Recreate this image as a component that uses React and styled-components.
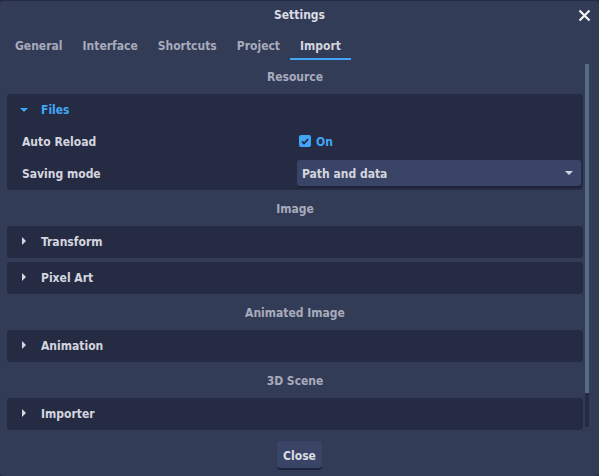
import React, { useState } from 'react'
import styled, { createGlobalStyle } from 'styled-components'

const GlobalStyle = createGlobalStyle`
  html, body {
    margin: 0;
    padding: 0;
    background: #262b44;
  }
  body {
    font-family: "DejaVu Sans Condensed", "DejaVu Sans", sans-serif;
    font-stretch: condensed;
    font-weight: bold;
    font-size: 12px;
    color: #d4d6df;
  }
`

const tabs = ['General', 'Interface', 'Shortcuts', 'Project', 'Import']

export default function App() {
  const [active, setActive] = useState('Import')
  const [autoReload, setAutoReload] = useState(true)

  return (
    <>
      <GlobalStyle />
      <Dialog>
        <TitleBar>
          <span />
          <Title>Settings</Title>
          <CloseX aria-label="close">
            <svg width="13" height="13" viewBox="0 0 13 13">
              <path d="M1.5 1.5 L11.5 11.5 M11.5 1.5 L1.5 11.5" stroke="#f4f4f4" strokeWidth="2.2" />
            </svg>
          </CloseX>
        </TitleBar>

        <TabBar>
          {tabs.map(t => (
            <Tab key={t} $active={t === active} onClick={() => setActive(t)}>{t}</Tab>
          ))}
        </TabBar>

        <Body>
          <Scroll>
            <SectionTitle>Resource</SectionTitle>
            <Panel>
              <PanelHeader $open>
                <ArrowDown />
                Files
              </PanelHeader>
              <Row $h={34}>
                <Label>Auto Reload</Label>
                <CheckWrap onClick={() => setAutoReload(!autoReload)}>
                  <Check $on={autoReload}>
                    {autoReload && (
                      <svg width="8" height="7" viewBox="0 0 8 7">
                        <path d="M1 3.5 L3 5.5 L7 1.2" fill="none" stroke="#262b44" strokeWidth="1.8" />
                      </svg>
                    )}
                  </Check>
                  <Label $accent>{autoReload ? 'On' : 'Off'}</Label>
                </CheckWrap>
              </Row>
              <Row $h={30}>
                <Label>Saving mode</Label>
                <Select>
                  <Label>Path and data</Label>
                  <Caret />
                </Select>
              </Row>
            </Panel>

            <SectionTitle>Image</SectionTitle>
            <Panel>
              <PanelHeader><ArrowRight />Transform</PanelHeader>
            </Panel>
            <Panel>
              <PanelHeader><ArrowRight />Pixel Art</PanelHeader>
            </Panel>

            <SectionTitle>Animated Image</SectionTitle>
            <Panel>
              <PanelHeader><ArrowRight />Animation</PanelHeader>
            </Panel>

            <SectionTitle>3D Scene</SectionTitle>
            <Panel>
              <PanelHeader><ArrowRight />Importer</PanelHeader>
            </Panel>
          </Scroll>
          <ScrollTrack>
            <ScrollThumb />
          </ScrollTrack>
        </Body>

        <Footer>
          <Button>Close</Button>
        </Footer>
      </Dialog>
    </>
  )
}

const Dialog = styled.div`
  margin-top: 1px;
  height: 475px;
  width: 599px;
  background: #333c57;
  border-radius: 4px;
  display: flex;
  flex-direction: column;
  box-sizing: border-box;
`

const TitleBar = styled.div`
  height: 28px;
  display: grid;
  grid-template-columns: 1fr auto 1fr;
  align-items: center;
`

const Title = styled.div`
  color: #dcdde3;
`

const CloseX = styled.div`
  justify-self: end;
  margin-right: 8px;
  display: flex;
  cursor: pointer;
`

const TabBar = styled.div`
  display: flex;
  padding-left: 5px;
  height: 31px;
`

const Tab = styled.div`
  padding: 4px 10px 0;
  display: flex;
  align-items: center;
  box-sizing: border-box;
  color: ${p => (p.$active ? '#d4d6df' : '#a7abbb')};
  border-bottom: 2px solid ${p => (p.$active ? '#41a6f6' : 'transparent')};
  cursor: pointer;
`

const Body = styled.div`
  display: flex;
  padding-left: 7px;
  height: 373px;
`

const Scroll = styled.div`
  width: 576px;
  display: flex;
  flex-direction: column;
  gap: 4px;
  padding-top: 2px;
  overflow: hidden;
`

const SectionTitle = styled.div`
  height: 28px;
  padding-top: 2px;
  box-sizing: border-box;
  display: flex;
  align-items: center;
  justify-content: center;
  color: #a7abbb;
  flex-shrink: 0;
`

const Panel = styled.div`
  background: #262b44;
  border-radius: 3px;
  padding-bottom: 2px;
  flex-shrink: 0;
`

const PanelHeader = styled.div`
  height: 30px;
  padding-top: 2px;
  box-sizing: border-box;
  display: flex;
  align-items: center;
  padding-left: 13px;
  gap: 13px;
  color: ${p => (p.$open ? '#41a6f6' : '#d4d6df')};
`

const ArrowDown = styled.span`
  width: 0;
  height: 0;
  border-left: 4px solid transparent;
  border-right: 4px solid transparent;
  border-top: 4px solid #41a6f6;
  margin-top: -1px;
`

const ArrowRight = styled.span`
  width: 0;
  height: 0;
  border-top: 4.5px solid transparent;
  border-bottom: 4.5px solid transparent;
  border-left: 4px solid #d4d6df;
  margin: -2px 2px 0 2px;
`

const Row = styled.div`
  display: grid;
  grid-template-columns: 275px 1fr;
  align-items: center;
  height: ${p => p.$h}px;
  padding: 0 2px 0 15px;
`

const Label = styled.span`
  padding-top: 2px;
  color: ${p => (p.$accent ? '#41a6f6' : '#d4d6df')};
`

const CheckWrap = styled.div`
  display: flex;
  align-items: center;
  gap: 5px;
  padding-left: 2px;
  cursor: pointer;
`

const Check = styled.span`
  width: 12px;
  height: 12px;
  border-radius: 2px;
  background: ${p => (p.$on ? '#41a6f6' : '#3a4466')};
  display: flex;
  align-items: center;
  justify-content: center;
`

const Select = styled.div`
  height: 26px;
  background: #3a4466;
  border-radius: 3px;
  box-shadow: 0 2px 0 #1f2339;
  display: flex;
  align-items: center;
  justify-content: space-between;
  padding: 0 8px 0 5px;
  margin-top: -1px;
`

const Caret = styled.span`
  width: 0;
  height: 0;
  border-left: 4px solid transparent;
  border-right: 4px solid transparent;
  border-top: 4px solid #d4d6df;
`

const ScrollTrack = styled.div`
  margin: 4px 0 0 2px;
  width: 4px;
  height: 363px;
  background: #262b44;
  border-radius: 1px;
`

const ScrollThumb = styled.div`
  height: 329px;
  background: #566c86;
`

const Footer = styled.div`
  display: flex;
  justify-content: center;
  padding-top: 8px;
`

const Button = styled.div`
  height: 27px;
  padding: 3px 6px 0;
  box-sizing: border-box;
  display: flex;
  align-items: center;
  background: #3a4466;
  border-radius: 3px;
  box-shadow: 0 2px 0 #1f2339;
  color: #dcdde3;
  cursor: pointer;
`
